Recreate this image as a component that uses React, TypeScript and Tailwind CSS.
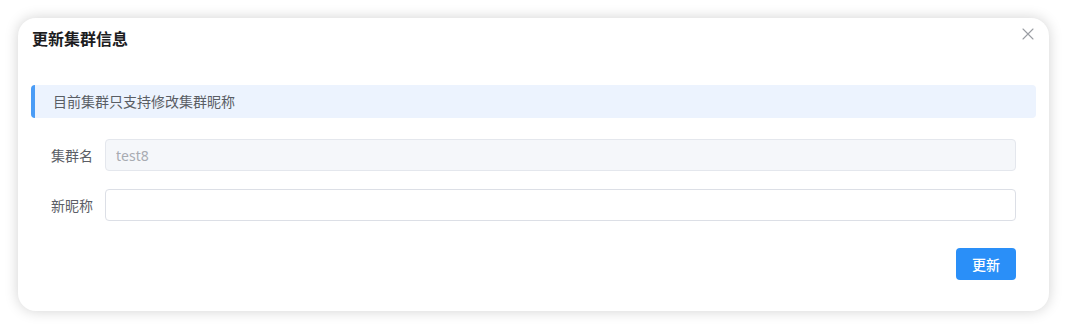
import { useState } from 'react';

const FONT = '"Noto Sans", "Noto Sans CJK SC", sans-serif';

function CloseIcon() {
  return (
    <svg width="12" height="12" viewBox="0 0 12 12" fill="none" stroke="#9a9da3" strokeWidth="1.1" strokeLinecap="round">
      <path d="M1 1l10 10M11 1L1 11" />
    </svg>
  );
}

function FormRow({ label, children }: { label: string; children: React.ReactNode }) {
  return (
    <div className="flex items-center">
      <label className="w-[60px] shrink-0 pr-3 text-right text-[14px] text-[#5b5e66]">{label}</label>
      <div className="flex-1">{children}</div>
    </div>
  );
}

export default function App() {
  const [nickname, setNickname] = useState('');

  return (
    <div className="min-h-[330px] bg-white p-[18px]" style={{ fontFamily: FONT }}>
      <div className="w-[1031px] rounded-[18px] bg-white px-[13px] pb-[31px] pt-[9px] shadow-[0_0_14px_rgba(0,0,0,0.18)]">
        {/* header */}
        <div className="flex items-start justify-between">
          <h2 className="pl-px text-[16px] font-semibold leading-6 text-[#1d1d1f]">更新集群信息</h2>
          <button className="-mt-[1px] mr-0 p-[2px]" aria-label="close">
            <CloseIcon />
          </button>
        </div>

        {/* notice */}
        <div className="mt-[34px] flex h-[33px] items-center rounded-[4px] border-l-4 border-[#4a9cf6] bg-[#ecf3fe] pl-[18px] text-[14px] text-[#595d64]">
          目前集群只支持修改集群昵称
        </div>

        {/* form */}
        <div className="mr-[20px] mt-[21px] flex flex-col gap-[18px] pl-[14px]">
          <FormRow label="集群名">
            <input
              disabled
              value="test8"
              className="h-8 w-full rounded-[4px] border border-[#e4e7ed] bg-[#f5f7fa] px-[10px] text-[14px] text-[#a8abb2] outline-none"
            />
          </FormRow>
          <FormRow label="新昵称">
            <input
              value={nickname}
              onChange={(e) => setNickname(e.target.value)}
              className="h-8 w-full rounded-[4px] border border-[#dcdfe6] bg-white px-[10px] text-[14px] text-[#303133] outline-none"
            />
          </FormRow>
        </div>

        <div className="mr-[20px] mt-[27px] flex justify-end">
          <button className="h-8 w-[60px] rounded-[4px] bg-[#2a8ff8] text-[14px] font-medium text-white">更新</button>
        </div>
      </div>
    </div>
  );
}
